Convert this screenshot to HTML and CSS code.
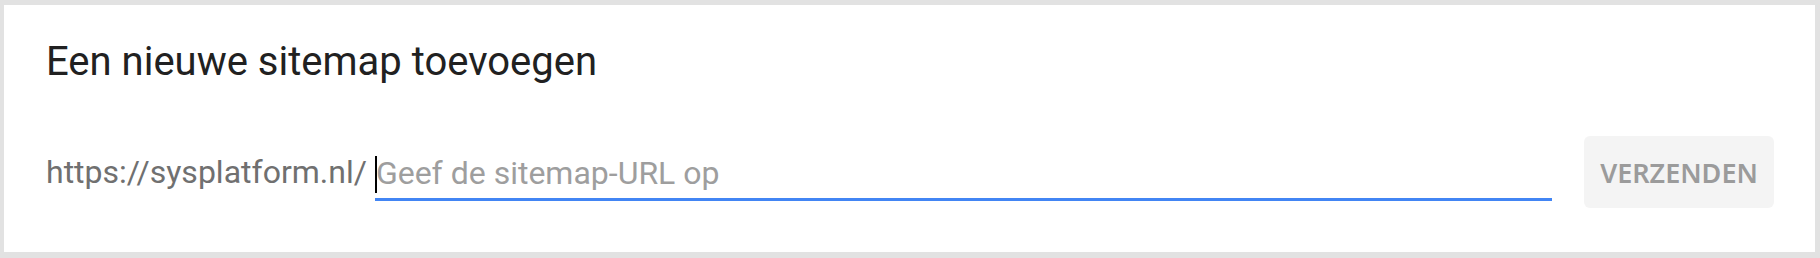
FILE: index.html
```html
<!DOCTYPE html>
<html lang="nl">
<head>
<meta charset="utf-8">
<title>Een nieuwe sitemap toevoegen</title>
<link rel="stylesheet" href="styles.css">
</head>
<body>
  <section class="card">
    <h2 class="card-title">Een nieuwe sitemap toevoegen</h2>
    <form class="sitemap-row" onsubmit="return false">
      <span class="prefix">https://sysplatform.nl/</span>
      <label class="field">
        <span class="caret"></span>
        <input class="field-input" type="text" placeholder="Geef de sitemap-URL op">
      </label>
      <button class="submit" type="submit" disabled>VERZENDEN</button>
    </form>
  </section>
</body>
</html>
```

FILE: styles.css
```css
* { box-sizing: border-box; }

html, body {
  margin: 0;
  padding: 0;
  background: #e2e2e2;
}

body {
  padding: 5px 5px 6px 4px;
  font-family: Roboto, "Liberation Sans", sans-serif;
}

.card {
  background: #ffffff;
  height: 247px;
  padding: 34px 41px 0 42px;
}

.card-title {
  margin: 0;
  font-size: 40px;
  line-height: 46px;
  font-weight: 400;
  color: #212121;
}

.sitemap-row {
  display: flex;
  align-items: center;
  height: 72px;
  margin: 51px 0 0 0;
}

.prefix {
  font-size: 32px;
  color: #707070;
  white-space: nowrap;
  margin-right: 8px;
}

.field {
  position: relative;
  flex: 1;
  display: block;
  height: 58px;
  border-bottom: 3px solid #4285f4;
}

.caret {
  position: absolute;
  left: 0;
  top: 13px;
  width: 2px;
  height: 37px;
  background: #000000;
}

.field-input {
  display: block;
  width: 100%;
  height: 100%;
  border: 0;
  outline: none;
  padding: 4px 0 0 1px;
  margin: 0;
  background: transparent;
  font-family: Roboto, "Liberation Sans", sans-serif;
  font-size: 32px;
  color: #212121;
  caret-color: transparent;
}

.field-input::placeholder {
  color: #9e9e9e;
  opacity: 1;
}

.submit {
  margin-left: 32px;
  width: 190px;
  height: 72px;
  border: 0;
  border-radius: 6px;
  background: #f4f4f4;
  color: #9b9b9b;
  font-family: "Noto Sans", "Open Sans", sans-serif;
  font-weight: 600;
  font-size: 27px;
  letter-spacing: 0;
  padding: 0;
}
```
